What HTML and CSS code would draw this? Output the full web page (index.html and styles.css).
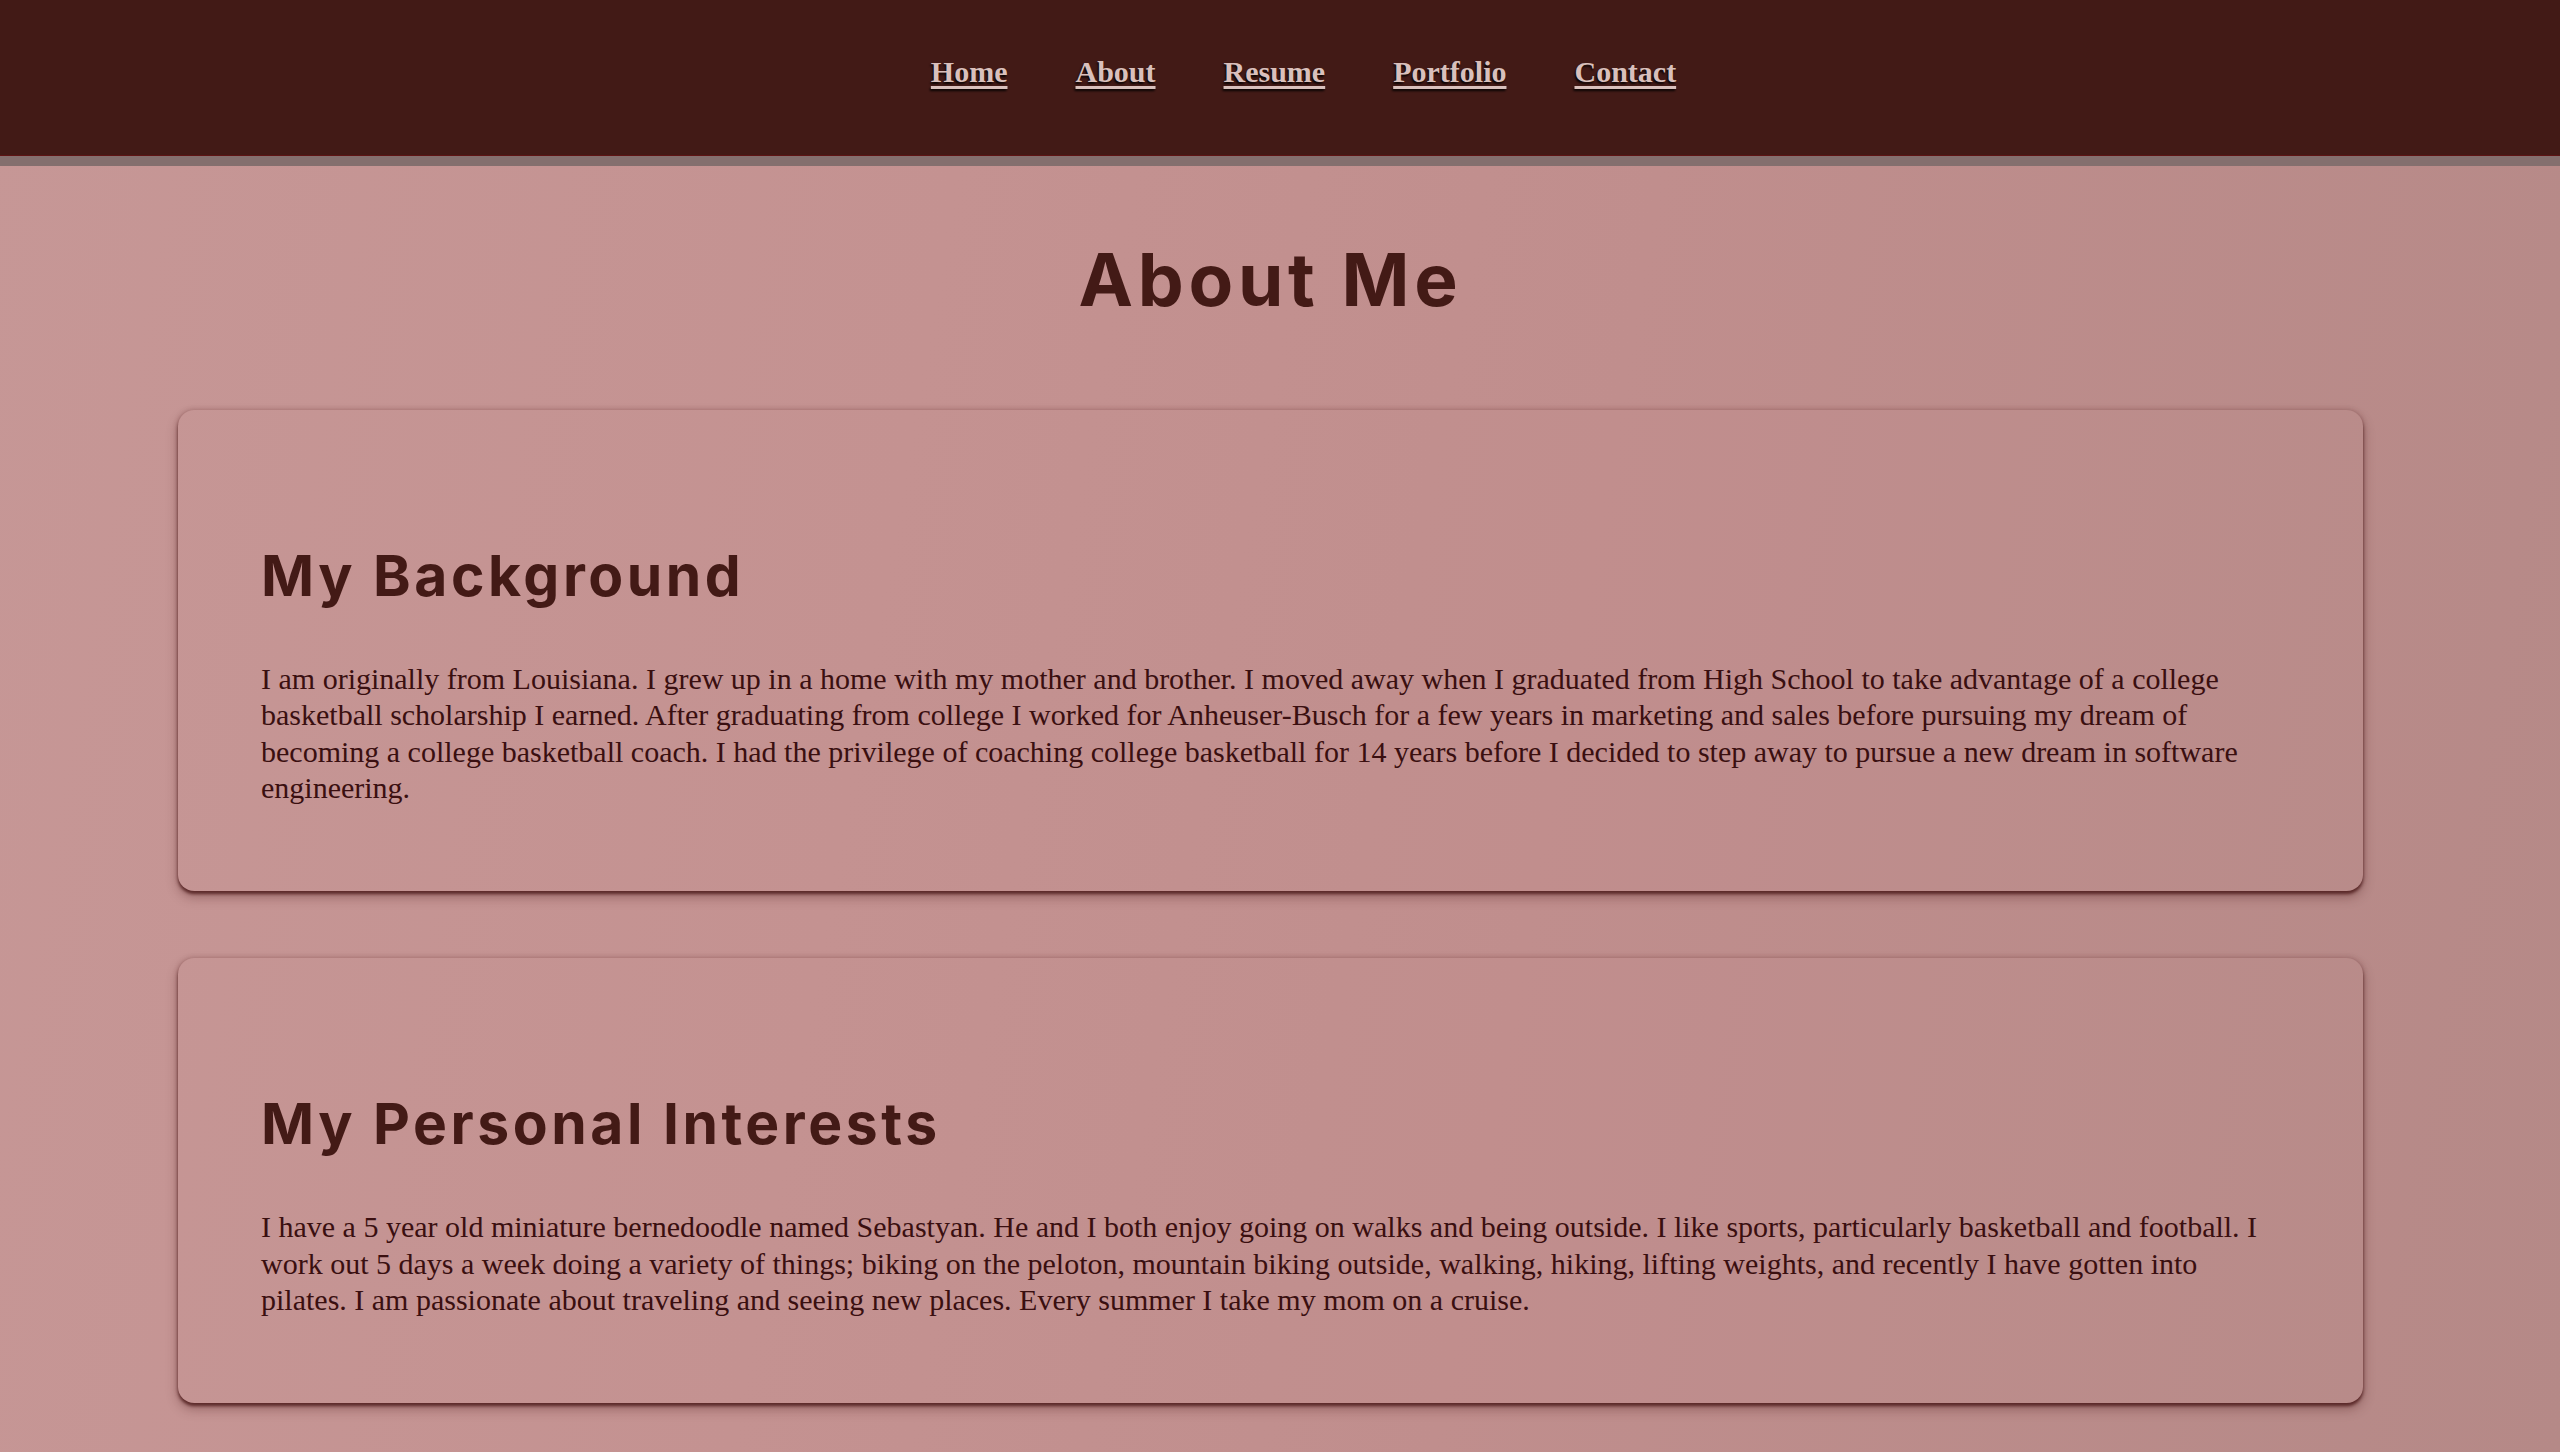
FILE: index.html
```html
<!DOCTYPE html>
<html lang="en">
<head>
<meta charset="utf-8">
<title>About Me</title>
<link rel="stylesheet" href="styles.css">
</head>
<body>
<header class="site-header">
  <nav class="main-nav">
    <ul class="nav-list">
      <li><a href="#">Home</a></li>
      <li><a href="#">About</a></li>
      <li><a href="#">Resume</a></li>
      <li><a href="#">Portfolio</a></li>
      <li><a href="#">Contact</a></li>
    </ul>
  </nav>
</header>
<main class="content">
  <h1 class="page-title">About Me</h1>
  <section class="card">
    <h2 class="card-title">My Background</h2>
    <p class="card-text">I am originally from Louisiana. I grew up in a home with my mother and brother. I moved away when I graduated from High School to take advantage of a college basketball scholarship I earned. After graduating from college I worked for Anheuser-Busch for a few years in marketing and sales before pursuing my dream of becoming a college basketball coach. I had the privilege of coaching college basketball for 14 years before I decided to step away to pursue a new dream in software engineering.</p>
  </section>
  <section class="card">
    <h2 class="card-title">My Personal Interests</h2>
    <p class="card-text">I have a 5 year old miniature bernedoodle named Sebastyan. He and I both enjoy going on walks and being outside. I like sports, particularly basketball and football. I work out 5 days a week doing a variety of things; biking on the peloton, mountain biking outside, walking, hiking, lifting weights, and recently I have gotten into pilates. I am passionate about traveling and seeing new places. Every summer I take my mom on a cruise.</p>
  </section>
</main>
</body>
</html>
```

FILE: styles.css
```css
html, body {
  margin: 0;
  padding: 0;
}

body {
  min-height: 1452px;
  background: linear-gradient(100deg, #c69796 0%, #c49291 35%, #c08e8d 60%, #b58987 100%);
  font-family: "Liberation Serif", "Times New Roman", serif;
  color: #3a0f10;
}

.site-header {
  height: 156px;
  background: #421a16;
  box-shadow: inset 0 -1px 0 #5e1414;
  border-bottom: 10px solid #846f6e;
}

.nav-list {
  list-style: none;
  margin: 0;
  padding: 55px 0 0 47px;
  display: flex;
  justify-content: center;
  gap: 68px;
}

.nav-list a {
  font-family: "Liberation Serif", "Times New Roman", serif;
  font-weight: 700;
  font-size: 30px;
  color: #d9c0bc;
  text-decoration: underline;
  text-decoration-thickness: 3px;
  text-underline-offset: 4px;
  text-shadow: -1px 2px 2px rgba(0, 0, 0, 0.85);
}

.content {
  padding: 70px 197px 40px 178px;
  display: flex;
  flex-direction: column;
  gap: 67px;
}

.page-title {
  margin: 0 0 19px;
  text-align: center;
  font-family: Inter, "Open Sans", sans-serif;
  font-weight: 700;
  font-size: 73px;
  line-height: 1.2;
  letter-spacing: 0.065em;
  color: #431a16;
}

.card {
  padding: 132px 83px 84px;
  border-radius: 16px;
  background: rgba(200, 150, 150, 0.08);
  box-shadow: 0 3px 3px rgba(70, 20, 20, 0.7), 0 6px 12px rgba(70, 20, 20, 0.35), 0 0 5px rgba(90, 35, 35, 0.3);
}

.card-title {
  margin: 0 0 51px;
  font-family: Inter, "Open Sans", sans-serif;
  font-weight: 700;
  font-size: 57px;
  line-height: 1.2;
  letter-spacing: 0.062em;
  color: #431a16;
}

.card-text {
  margin: 0;
  font-size: 30px;
  line-height: 36.5px;
}
```
